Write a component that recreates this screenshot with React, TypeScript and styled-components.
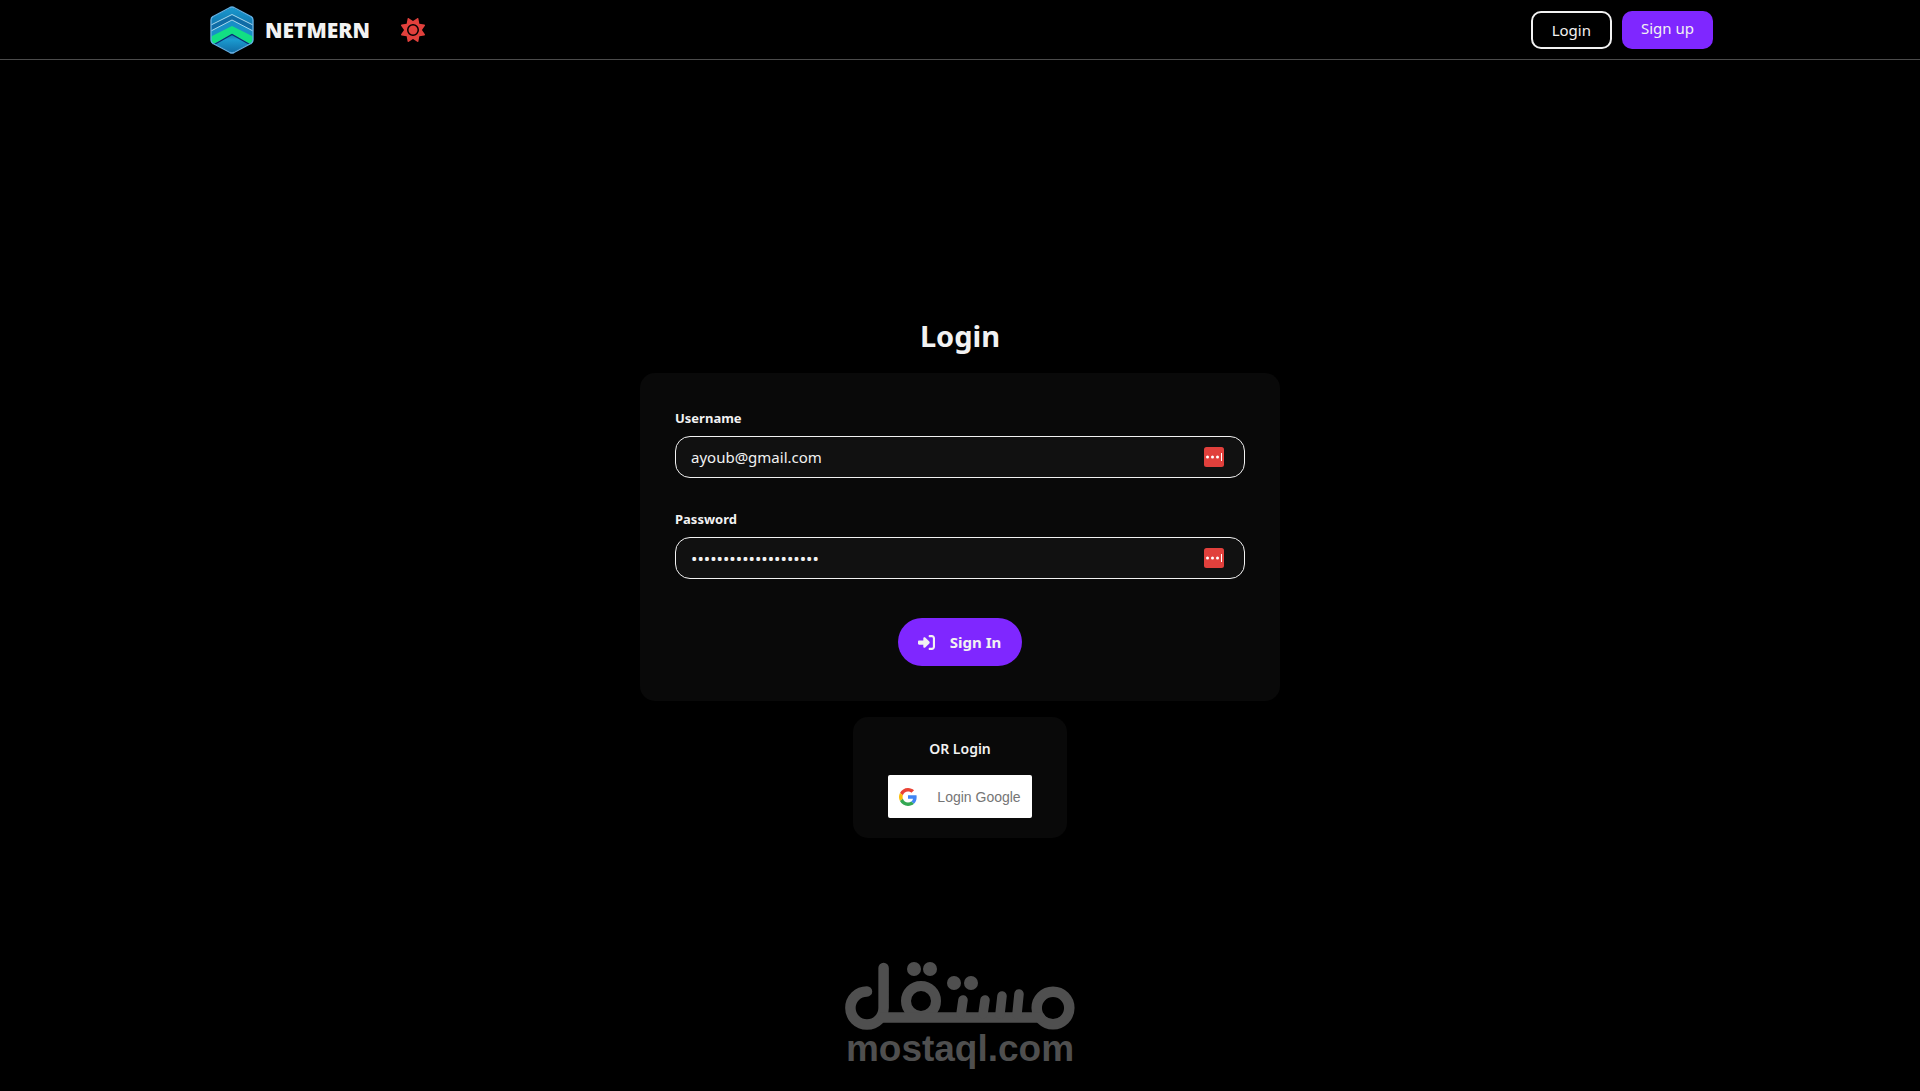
import React, { useState } from "react";
import styled, { createGlobalStyle } from "styled-components";
import { FaRightToBracket, FaSun } from "react-icons/fa6";

const GlobalStyle = createGlobalStyle`
  *, *::before, *::after { box-sizing: border-box; }
  body {
    margin: 0;
    background: #000;
    color: #f2f2f2;
    font-family: "Segoe UI", "Noto Sans", sans-serif;
    font-size: 15px;
  }
  button, input { font: inherit; }
`;

const Page = styled.div`
  position: relative;
  display: flex;
  flex-direction: column;
  min-height: 100vh;
`;

const Header = styled.header`
  border-bottom: 1px solid #4b4b4b;
`;

const HeaderInner = styled.div`
  display: flex;
  align-items: center;
  justify-content: space-between;
  max-width: 1536px;
  min-height: 59px;
  margin: 0 auto;
  padding: 0 15px 0 18px;
`;

const Group = styled.div<{ $gap: number }>`
  display: flex;
  align-items: center;
  gap: ${(p) => p.$gap}px;
`;

const Brand = styled.a`
  display: flex;
  align-items: center;
  gap: 11px;
  color: inherit;
  font-size: 21px;
  font-weight: 900;
  text-decoration: none;
`;

const IconButton = styled.button`
  display: flex;
  padding: 0;
  border: 0;
  background: none;
  color: #e1403c;
  cursor: pointer;
`;

const NavLink = styled.a<{ $filled?: boolean }>`
  display: block;
  height: 38px;
  padding: 0 19px;
  border: ${(p) => (p.$filled ? "0" : "2px solid #f2f2f2")};
  border-radius: 10px;
  background: ${(p) => (p.$filled ? "#7f27ff" : "transparent")};
  color: #f2f2f2;
  line-height: 34px;
  text-decoration: none;
`;

const Main = styled.main`
  display: flex;
  flex: 1;
  flex-direction: column;
  align-items: center;
  justify-content: center;
`;

const Title = styled.h1`
  margin: 0 0 14px;
  font-size: 29px;
  font-weight: 700;
  line-height: 46px;
`;

const FormCard = styled.form`
  display: flex;
  flex-direction: column;
  align-items: center;
  width: 100%;
  max-width: 640px;
  padding: 35px;
  border-radius: 15px;
  background: #090909;
`;

const Field = styled.div`
  display: flex;
  flex-direction: column;
  gap: 8px;
  width: 100%;
  margin-bottom: 31px;
`;

const Label = styled.label`
  font-size: 13px;
  font-weight: 700;
  line-height: 20px;
`;

const InputBox = styled.div`
  display: flex;
  align-items: center;
  height: 42px;
  padding: 0 20px 0 15px;
  border: 1px solid #f2f2f2;
  border-radius: 15px;
  background: #111;
`;

const Input = styled.input`
  flex: 1;
  min-width: 0;
  padding: 0;
  border: 0;
  outline: 0;
  background: none;
  color: #f2f2f2;

  &[type="password"] {
    font-size: 17px;
  }
`;

const SignIn = styled.button`
  display: flex;
  align-items: center;
  gap: 15px;
  height: 48px;
  margin-top: 8px;
  padding: 0 21px 0 20px;
  border: 0;
  border-radius: 24px;
  background: #7f27ff;
  color: #f2f2f2;
  font-weight: 700;
  cursor: pointer;
`;

const AltCard = styled.section`
  display: flex;
  flex-direction: column;
  align-items: center;
  gap: 14px;
  margin-top: 16px;
  padding: 20px 35px;
  border-radius: 15px;
  background: #090909;
`;

const AltTitle = styled.h2`
  margin: 0;
  font-size: 14px;
  font-weight: 600;
  line-height: 24px;
`;

const GoogleButton = styled.button`
  display: flex;
  align-items: center;
  gap: 20px;
  height: 43px;
  padding: 0 11px;
  border: 0;
  border-radius: 2px;
  background: #fff;
  color: #757575;
  font-family: "Liberation Sans", Arial, sans-serif;
  font-size: 14px;
  cursor: pointer;
`;

const Watermark = styled.div`
  position: absolute;
  bottom: 23px;
  left: 50%;
  display: flex;
  flex-direction: column;
  align-items: center;
  transform: translateX(-50%);
  color: #4f4f4f;
  font-family: "Liberation Sans", Arial, sans-serif;
  font-size: 37px;
  font-weight: 700;
  line-height: 38px;
  pointer-events: none;
`;

const Logo = () => (
  <svg width="44" height="48" viewBox="0 0 44 48" aria-hidden="true">
    <defs>
      <linearGradient id="logo-base" x1="0" y1="0" x2="0" y2="1">
        <stop offset="0" stopColor="#1b9bd0" />
        <stop offset="0.55" stopColor="#0e6ba4" />
        <stop offset="0.7" stopColor="#1b9bd0" />
        <stop offset="1" stopColor="#0f68a2" />
      </linearGradient>
      <clipPath id="logo-shape">
        <path d="M22 1 42 11Q43 12 43 14V34Q43 36 42 37L22 47 2 37Q1 36 1 34V14Q1 12 2 11Z" />
      </clipPath>
    </defs>
    <g clipPath="url(#logo-shape)">
      <path fill="url(#logo-base)" d="M0 0h44v48H0z" />
      <path fill="#0f6ca6" d="M0 20 22 9 44 20V25L22 14 0 25Z" />
      <path fill="#188fc6" d="M0 25 22 14 44 25V32L22 21 0 32Z" />
      <path fill="#12df83" d="M0 31 22 20 44 31V40L22 28 0 40Z" />
      <path fill="none" stroke="#b9e0f0" strokeWidth="0.9" d="M0 19.500 22 8.500 44 19.500M0 25.500 22 14 44 25.500" />
      <path fill="none" stroke="#092e70" strokeWidth="1.2" d="M0 41 22 28.500 44 41" />
    </g>
    <path
      fill="none"
      stroke="#62aee2"
      strokeWidth="1.4"
      strokeLinejoin="round"
      d="M20 1.500Q22 .5 24 1.500L41 10.500Q43 11.500 43 14V34Q43 36.500 41 37.500L24 46.500Q22 47.500 20 46.500L3 37.500Q1 36.500 1 34V14Q1 11.500 3 10.500Z"
    />
  </svg>
);

const KeyBadge = () => (
  <svg width="20" height="20" viewBox="0 0 20 20" aria-hidden="true">
    <rect width="20" height="20" rx="2.500" fill="#e1403c" />
    <g fill="#fff">
      <circle cx="3.500" cy="10" r="1.500" />
      <circle cx="8.500" cy="10" r="1.500" />
      <circle cx="13.500" cy="10" r="1.500" />
      <path d="M17 6h1v8h-1z" />
    </g>
  </svg>
);

const GoogleIcon = () => (
  <svg width="18" height="18" viewBox="0 0 18 18" aria-hidden="true">
    <path fill="#ea4335" d="M9 3.480c1.690 0 2.830.730 3.480 1.340l2.540-2.480C13.460.890 11.430 0 9 0 5.480 0 2.440 2.020.960 4.960l2.910 2.260C4.600 5.050 6.620 3.480 9 3.480z" />
    <path fill="#4285f4" d="M17.640 9.200c0-.740-.060-1.280-.190-1.840H9v3.340h4.960c-.1.830-.640 2.080-1.840 2.920l2.840 2.200c1.700-1.570 2.680-3.880 2.680-6.620z" />
    <path fill="#fbbc05" d="M3.880 10.780A5.540 5.540 0 0 1 3.580 9c0-.620.110-1.220.290-1.780L.960 4.960A9.008 9.008 0 0 0 0 9c0 1.450.350 2.820.960 4.040l2.920-2.260z" />
    <path fill="#34a853" d="M9 18c2.430 0 4.470-.800 5.960-2.180l-2.840-2.200c-.760.530-1.780.900-3.120.900-2.380 0-4.400-1.570-5.120-3.740L.970 13.040C2.450 15.980 5.480 18 9 18z" />
  </svg>
);

const MostaqlMark = () => (
  <svg width="230" height="68" viewBox="0 0 230 68" aria-hidden="true">
    <g fill="none" stroke="currentColor" strokeWidth="10" strokeLinecap="round">
      <circle cx="208" cy="46" r="16.300" strokeWidth="10.500" />
      <circle cx="76" cy="39" r="15" />
      <path d="M22 29.400A16.600 16.600 0 1 0 38.600 46V6" strokeWidth="10.500" />
      <path d="M38 55.500H195" strokeWidth="10.500" />
      <path d="M116 52 118 38M138 52 140 38M155 52 157 34M172 52 174 32" strokeWidth="9.500" />
    </g>
    <g fill="currentColor">
      <circle cx="69" cy="7" r="7" />
      <circle cx="85" cy="7" r="7" />
      <circle cx="109" cy="21" r="7" />
      <circle cx="126" cy="21" r="7" />
    </g>
  </svg>
);

export default function App() {
  const [username, setUsername] = useState("ayoub@gmail.com");
  const [password, setPassword] = useState("x".repeat(20));

  return (
    <Page>
      <GlobalStyle />
      <Header>
        <HeaderInner>
          <Group $gap={31}>
            <Brand href="#">
              <Logo />
              NETMERN
            </Brand>
            <IconButton type="button" aria-label="Toggle theme">
              <FaSun size={24} />
            </IconButton>
          </Group>
          <Group as="nav" $gap={10}>
            <NavLink href="#login">Login</NavLink>
            <NavLink href="#signup" $filled>
              Sign up
            </NavLink>
          </Group>
        </HeaderInner>
      </Header>
      <Main>
        <Title>Login</Title>
        <FormCard onSubmit={(e: React.FormEvent) => e.preventDefault()}>
          <Field>
            <Label htmlFor="username">Username</Label>
            <InputBox>
              <Input id="username" value={username} onChange={(e) => setUsername(e.target.value)} />
              <KeyBadge />
            </InputBox>
          </Field>
          <Field>
            <Label htmlFor="password">Password</Label>
            <InputBox>
              <Input id="password" type="password" value={password} onChange={(e) => setPassword(e.target.value)} />
              <KeyBadge />
            </InputBox>
          </Field>
          <SignIn type="submit">
            <FaRightToBracket size={17} />
            Sign In
          </SignIn>
        </FormCard>
        <AltCard>
          <AltTitle>OR Login</AltTitle>
          <GoogleButton type="button">
            <GoogleIcon />
            Login Google
          </GoogleButton>
        </AltCard>
      </Main>
      <Watermark>
        <MostaqlMark />
        mostaql.com
      </Watermark>
    </Page>
  );
}
